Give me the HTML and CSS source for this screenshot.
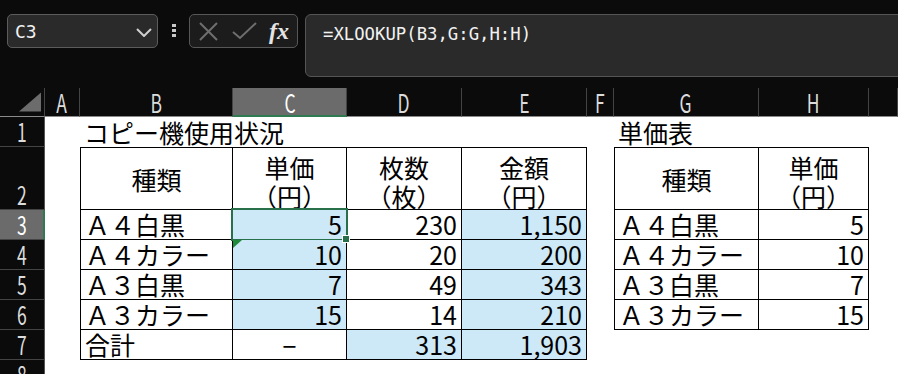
FILE: index.html
```html
<!DOCTYPE html>
<html lang="ja">
<head>
  <meta charset="UTF-8">
  <title>コピー機使用状況</title>
  <link rel="stylesheet" href="styles.css">
</head>
<body>
  <!-- Name box + formula bar -->
  <div class="toolbar">
    <div class="namebox">
      <span class="ref">C3</span>
      <svg class="chevron" width="16" height="9" viewBox="0 0 16 9"><polyline points="1,1 8,8 15,1" fill="none" stroke="#cfcfcf" stroke-width="2"/></svg>
    </div>
    <div class="grip"><i></i><i></i><i></i></div>
    <div class="fxbar">
      <svg class="icon-x" width="19" height="19" viewBox="0 0 19 19"><path d="M1 1L18 18M18 1L1 18" stroke="#6e6e6e" stroke-width="2"/></svg>
      <svg class="icon-check" width="26" height="18" viewBox="0 0 26 18"><polyline points="2,10 9,16 25,1" fill="none" stroke="#6e6e6e" stroke-width="2"/></svg>
      <span class="fx">fx</span>
    </div>
    <div class="formula">=XLOOKUP(B3,G:G,H:H)</div>
  </div>

  <!-- Sheet grid -->
  <div class="sheet">
    <div class="row">
      <div class="corner"><svg width="23" height="20" viewBox="0 0 23 20"><polygon points="0,20 23,20 23,0" fill="#6c6c6c"/></svg></div>
      <div class="col"><span>A</span></div>
      <div class="col"><span>B</span></div>
      <div class="col sel"><span>C</span></div>
      <div class="col"><span>D</span></div>
      <div class="col"><span>E</span></div>
      <div class="col"><span>F</span></div>
      <div class="col"><span>G</span></div>
      <div class="col"><span>H</span></div>
      <div class="col"></div>
    </div>

    <div class="row">
      <div class="rh"><span>1</span></div>
      <div class="cell"></div>
      <div class="cell txt span4">コピー機使用状況</div>
      <div class="cell"></div>
      <div class="cell txt span2">単価表</div>
      <div class="cell"></div>
    </div>

    <div class="row">
      <div class="rh"><span>2</span></div>
      <div class="cell"></div>
      <div class="cell b bl bt mid">種類</div>
      <div class="cell b bt mid two"><span>単価<br>（円）</span></div>
      <div class="cell b bt mid two"><span>枚数<br>（枚）</span></div>
      <div class="cell b bt mid two"><span>金額<br>（円）</span></div>
      <div class="cell"></div>
      <div class="cell b bl bt mid">種類</div>
      <div class="cell b bt mid two"><span>単価<br>（円）</span></div>
      <div class="cell"></div>
    </div>

    <div class="row">
      <div class="rh sel"><span>3</span></div>
      <div class="cell"></div>
      <div class="cell b bl txt">Ａ４白黒</div>
      <div class="cell b num fill active">5</div>
      <div class="cell b num">230</div>
      <div class="cell b num fill">1,150</div>
      <div class="cell"></div>
      <div class="cell b bl txt">Ａ４白黒</div>
      <div class="cell b num">5</div>
      <div class="cell"></div>
    </div>

    <div class="row">
      <div class="rh"><span>4</span></div>
      <div class="cell"></div>
      <div class="cell b bl txt">Ａ４カラー</div>
      <div class="cell b num fill flag">10</div>
      <div class="cell b num">20</div>
      <div class="cell b num fill">200</div>
      <div class="cell"></div>
      <div class="cell b bl txt">Ａ４カラー</div>
      <div class="cell b num">10</div>
      <div class="cell"></div>
    </div>

    <div class="row">
      <div class="rh"><span>5</span></div>
      <div class="cell"></div>
      <div class="cell b bl txt">Ａ３白黒</div>
      <div class="cell b num fill">7</div>
      <div class="cell b num">49</div>
      <div class="cell b num fill">343</div>
      <div class="cell"></div>
      <div class="cell b bl txt">Ａ３白黒</div>
      <div class="cell b num">7</div>
      <div class="cell"></div>
    </div>

    <div class="row">
      <div class="rh"><span>6</span></div>
      <div class="cell"></div>
      <div class="cell b bl txt">Ａ３カラー</div>
      <div class="cell b num fill">15</div>
      <div class="cell b num">14</div>
      <div class="cell b num fill">210</div>
      <div class="cell"></div>
      <div class="cell b bl txt">Ａ３カラー</div>
      <div class="cell b num">15</div>
      <div class="cell"></div>
    </div>

    <div class="row">
      <div class="rh"><span>7</span></div>
      <div class="cell"></div>
      <div class="cell b bl txt">合計</div>
      <div class="cell b mid dash">−</div>
      <div class="cell b num fill">313</div>
      <div class="cell b num fill">1,903</div>
      <div class="cell"></div>
      <div class="cell"></div>
      <div class="cell"></div>
      <div class="cell"></div>
    </div>

    <div class="row">
      <div class="rh"><span>8</span></div>
      <div class="cell"></div>
      <div class="cell"></div>
      <div class="cell"></div>
      <div class="cell"></div>
      <div class="cell"></div>
      <div class="cell"></div>
      <div class="cell"></div>
      <div class="cell"></div>
      <div class="cell"></div>
    </div>
  </div>
</body>
</html>
```

FILE: styles.css
```css
body {
  margin: 0;
  width: 898px;
  height: 374px;
  overflow: hidden;
  background: #0b0b0b;
  font-family: "Noto Sans CJK JP", sans-serif;
}

/* ---------- toolbar ---------- */
.toolbar {
  display: flex;
  align-items: flex-start;
  height: 88px;
  box-sizing: border-box;
  padding: 14px 0 0 7px;
}

.namebox {
  width: 151px;
  height: 34px;
  box-sizing: border-box;
  border: 1px solid #5c5c5c;
  border-radius: 5px;
  background: #2a2a2a;
  display: flex;
  align-items: center;
  justify-content: space-between;
  padding: 0 5px 0 7px;
}

.ref {
  font: 18px "DejaVu Sans Mono", monospace;
  color: #f2f2f2;
}

.chevron {
  margin-top: 2px;
}

.grip {
  display: flex;
  flex-direction: column;
  gap: 2px;
  margin: 10px 0 0 14px;
}

.grip i {
  width: 4px;
  height: 3px;
  background: #c8c8c8;
}

.fxbar {
  width: 109px;
  height: 34px;
  box-sizing: border-box;
  margin-left: 13px;
  border: 1px solid #575757;
  border-radius: 5px;
  background: #1c1c1c;
  display: flex;
  align-items: center;
}

.icon-x {
  margin-left: 9px;
}

.icon-check {
  margin-left: 13px;
}

.fx {
  margin-left: 12px;
  font: italic bold 24px "Liberation Serif", serif;
  color: #e4e4e4;
  line-height: 24px;
}

.formula {
  flex: 1;
  height: 63px;
  box-sizing: border-box;
  margin: 0 -20px 0 7px;
  border: 1px solid #555;
  border-radius: 6px;
  background: #2a2a2a;
  padding: 9px 17px;
  font: 17.3px/20px "DejaVu Sans Mono", monospace;
  color: #f2f2f2;
}

/* ---------- sheet ---------- */
.sheet {
  display: grid;
  grid-template-columns: 45px 35px 153px 114px 115px 125px 27px 145px 110px 1fr;
  grid-template-rows: 29px 30px 63px repeat(6, 30px);
}

.row {
  display: contents;
}

.corner,
.col {
  box-sizing: border-box;
  background: #0b0b0b;
  border-right: 1px solid #444;
  border-bottom: 1px solid #8a8a8a;
}

.corner {
  display: flex;
  align-items: flex-end;
  padding: 0 3px 4px 19px;
}

.col,
.rh {
  color: #dcdcdc;
  font-size: 25px;
  text-align: center;
}

.col span,
.rh span {
  display: inline-block;
  transform: scaleX(0.7);
}

.col {
  line-height: 29px;
}

.col.sel {
  background: #6b6b6b;
  color: #fff;
  border-bottom: 2px solid #2f7a50;
}

.rh {
  box-sizing: border-box;
  background: #0b0b0b;
  border-right: 1px solid #555;
  border-bottom: 1px solid #444;
  line-height: 30px;
  display: flex;
  align-items: flex-end;
  justify-content: center;
}

.rh.sel {
  background: #6b6b6b;
  color: #fff;
  border-right: 2px solid #2f7a50;
}

.cell {
  box-sizing: border-box;
  min-height: 0;
  background: #fff;
  color: #000;
  font-size: 25px;
  line-height: 30px;
  white-space: nowrap;
  display: flex;
  align-items: flex-end;
}

.span4 {
  grid-column: span 4;
}

.span2 {
  grid-column: span 2;
}

.b {
  border-right: 1px solid #000;
  border-bottom: 1px solid #000;
}

.bl {
  border-left: 1px solid #000;
}

.bt {
  border-top: 1px solid #000;
}

.txt {
  padding-left: 4px;
}

.num {
  justify-content: flex-end;
  padding-right: 4px;
}

.mid {
  justify-content: center;
  align-items: center;
  text-align: center;
}

.two span {
  line-height: 29px;
}

.two {
  padding-top: 6px;
}

.fill {
  background: #cde8f6;
}

/* selected cell C3 */
.active {
  position: relative;
}

.active::after {
  content: "";
  position: absolute;
  left: -2px;
  top: -2px;
  right: -2px;
  bottom: -2px;
  border: 2px solid #27704a;
}

.active::before {
  content: "";
  position: absolute;
  right: -4px;
  bottom: -4px;
  width: 6px;
  height: 6px;
  background: #27704a;
  border: 1px solid #fff;
  z-index: 1;
}

/* error indicator in C4 */
.flag {
  position: relative;
}

.flag::before {
  content: "";
  position: absolute;
  left: 0;
  top: 0;
  border-top: 8px solid #1f8a3a;
  border-right: 9px solid transparent;
}
```
